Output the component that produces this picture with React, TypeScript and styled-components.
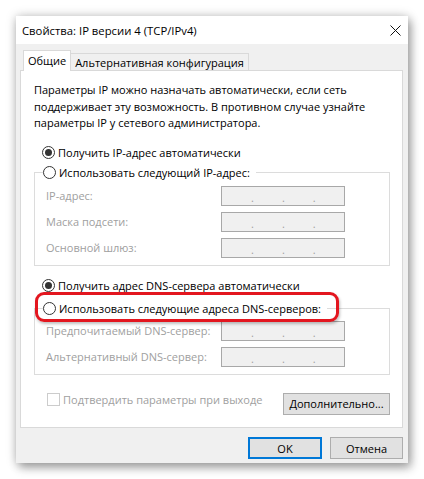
import React from "react";
import styled, { createGlobalStyle } from "styled-components";

const GlobalStyle = createGlobalStyle`
  html, body {
    margin: 0;
    padding: 0;
    background: #ffffff;
  }
  body {
    font-family: "Segoe UI", "Open Sans", "Noto Sans", sans-serif;
    font-size: 11px;
    color: #000;
  }
`;

const Page = styled.div`
  padding: 16px 0 0 16px;
  width: 424px;
  height: 479px;
  box-sizing: border-box;
  overflow: hidden;
`;

const Window = styled.div`
  width: 392px;
  height: 447px;
  display: flex;
  flex-direction: column;
  background: #f0f0f0;
  box-shadow: 0 0 10px rgba(0, 0, 0, 0.22), 3px 5px 9px rgba(0, 0, 0, 0.3);
`;

const TitleBar = styled.div`
  height: 28px;
  flex: none;
  display: flex;
  align-items: center;
  justify-content: space-between;
  background: #ffffff;
  padding: 0 7px 0 6px;
  font-size: 11.3px;
`;

const CloseButton = styled.div`
  width: 12px;
  height: 12px;
  display: flex;
  align-items: center;
  justify-content: center;
`;

const Body = styled.div`
  flex: 1;
  display: flex;
  flex-direction: column;
  padding: 7px 5px 3px 4px;
`;

const TabStrip = styled.div`
  display: flex;
  align-items: flex-end;
  height: 20px;
  padding-left: 3px;
  margin-bottom: -1px;
  position: relative;
  z-index: 1;
`;

const Tab = styled.div<{ $active?: boolean }>`
  box-sizing: border-box;
  height: ${(p) => (p.$active ? "21px" : "18px")};
  padding: 0 4px;
  display: flex;
  align-items: center;
  border: 1px solid #d9d9d9;
  border-bottom: ${(p) => (p.$active ? "none" : "1px solid #d9d9d9")};
  border-left: ${(p) => (p.$active ? "1px solid #d9d9d9" : "none")};
  background: ${(p) => (p.$active ? "#ffffff" : "#f0f0f0")};
  padding-bottom: ${(p) => (p.$active ? "1px" : "0")};
`;

const Panel = styled.div`
  height: 358px;
  box-sizing: border-box;
  background: #ffffff;
  border: 1px solid #d9d9d9;
  padding: 11px 12px 0 13px;
  display: flex;
  flex-direction: column;
`;

const Description = styled.p`
  margin: 0;
  line-height: 16.5px;
`;

const RadioRow = styled.label<{ $top: number }>`
  display: flex;
  align-items: center;
  height: 17px;
  margin-top: ${(p) => p.$top}px;
  margin-left: 8px;
  gap: 3px;
`;

const RadioCircle = styled.span<{ $checked?: boolean }>`
  width: 13px;
  height: 13px;
  box-sizing: border-box;
  border-radius: 50%;
  border: 1px solid #333333;
  background: #ffffff;
  display: flex;
  align-items: center;
  justify-content: center;
  flex: none;

  &::after {
    content: "";
    width: 7px;
    height: 7px;
    border-radius: 50%;
    background: ${(p) => (p.$checked ? "#333333" : "transparent")};
  }
`;

const GroupBox = styled.fieldset<{ $top: number }>`
  margin: ${(p) => p.$top}px 0 0 0;
  padding: 0 0 7px 0;
  border: 1px solid #dcdcdc;
  border-radius: 0;
  min-width: 0;
  position: relative;
`;

const Legend = styled.legend`
  padding: 0 6px 0 0;
  margin-left: 8px;
  position: relative;
`;

const LegendInner = styled.span`
  display: flex;
  align-items: center;
  height: 17px;
  gap: 3px;
`;

const Highlight = styled.span`
  position: absolute;
  left: -8px;
  right: -12px;
  top: -8px;
  bottom: -5px;
  border: 3.5px solid #e3161f;
  border-radius: 9px;
  box-shadow: 1px 2px 3px rgba(0, 0, 0, 0.25);
  pointer-events: none;
`;

const FieldRow = styled.div<{ $top: number }>`
  display: flex;
  align-items: center;
  height: 20px;
  margin-top: ${(p) => p.$top}px;
  padding-left: 11px;
`;

const FieldLabel = styled.span`
  width: 175px;
  color: #a0a0a0;
`;

const IpBox = styled.div`
  width: 124px;
  height: 20px;
  box-sizing: border-box;
  border: 1px solid #a8a8a8;
  background: #f0f0f0;
  display: flex;
  padding-left: 29px;
  gap: 28px;
  color: #a0a0a0;
  font-size: 11px;
  line-height: 22px;
`;

const BottomRow = styled.div`
  display: flex;
  align-items: flex-start;
  justify-content: space-between;
  margin-top: 18px;
`;

const CheckLabel = styled.label`
  display: flex;
  align-items: center;
  gap: 3px;
  margin-left: 13px;
  color: #a0a0a0;
  height: 14px;
`;

const CheckBox = styled.span`
  width: 13px;
  height: 13px;
  box-sizing: border-box;
  border: 1px solid #cccccc;
  background: #ffffff;
  flex: none;
`;

const Button = styled.button<{ $width: number; $default?: boolean }>`
  width: ${(p) => p.$width}px;
  height: 22px;
  box-sizing: border-box;
  font: inherit;
  color: #000;
  background: #e1e1e1;
  border: ${(p) => (p.$default ? "2px solid #0078d7" : "1px solid #adadad")};
  border-radius: 0;
  padding: 0;
`;

const Footer = styled.div`
  display: flex;
  justify-content: flex-end;
  gap: 8px;
  margin-top: 9px;
`;

const ipRows = [
  { label: "IP-адрес:", top: 5 },
  { label: "Маска подсети:", top: 6 },
  { label: "Основной шлюз:", top: 6 },
];

const dnsRows = [
  { label: "Предпочитаемый DNS-сервер:", top: 4 },
  { label: "Альтернативный DNS-сервер:", top: 6 },
];

const IpField = () => (
  <IpBox>
    <span>.</span>
    <span>.</span>
    <span>.</span>
  </IpBox>
);

export default function App() {
  return (
    <>
      <GlobalStyle />
      <Page>
        <Window>
          <TitleBar>
            <span>Свойства: IP версии 4 (TCP/IPv4)</span>
            <CloseButton>
              <svg width="11" height="11" viewBox="0 0 11 11">
                <path d="M0.5 0.5 L10.5 10.5 M10.5 0.5 L0.5 10.5" stroke="#111" strokeWidth="1" />
              </svg>
            </CloseButton>
          </TitleBar>
          <Body>
            <TabStrip>
              <Tab $active>Общие</Tab>
              <Tab>Альтернативная конфигурация</Tab>
            </TabStrip>
            <Panel>
              <Description>
                Параметры IP можно назначать автоматически, если сеть
                <br />
                поддерживает эту возможность. В противном случае узнайте
                <br />
                параметры IP у сетевого администратора.
              </Description>

              <RadioRow $top={12}>
                <RadioCircle $checked />
                Получить IP-адрес автоматически
              </RadioRow>

              <GroupBox $top={3}>
                <Legend>
                  <LegendInner>
                    <RadioCircle />
                    Использовать следующий IP-адрес:
                  </LegendInner>
                </Legend>
                {ipRows.map((row) => (
                  <FieldRow key={row.label} $top={row.top}>
                    <FieldLabel>{row.label}</FieldLabel>
                    <IpField />
                  </FieldRow>
                ))}
              </GroupBox>

              <RadioRow $top={11}>
                <RadioCircle $checked />
                Получить адрес DNS-сервера автоматически
              </RadioRow>

              <GroupBox $top={6}>
                <Legend>
                  <LegendInner>
                    <RadioCircle />
                    Использовать следующие адреса DNS-серверов:
                  </LegendInner>
                  <Highlight />
                </Legend>
                {dnsRows.map((row) => (
                  <FieldRow key={row.label} $top={row.top}>
                    <FieldLabel>{row.label}</FieldLabel>
                    <IpField />
                  </FieldRow>
                ))}
              </GroupBox>

              <BottomRow>
                <CheckLabel>
                  <CheckBox />
                  Подтвердить параметры при выходе
                </CheckLabel>
                <Button $width={107}>Дополнительно...</Button>
              </BottomRow>
            </Panel>
            <Footer>
              <Button $width={74} $default>
                OK
              </Button>
              <Button $width={73}>Отмена</Button>
            </Footer>
          </Body>
        </Window>
      </Page>
    </>
  );
}
